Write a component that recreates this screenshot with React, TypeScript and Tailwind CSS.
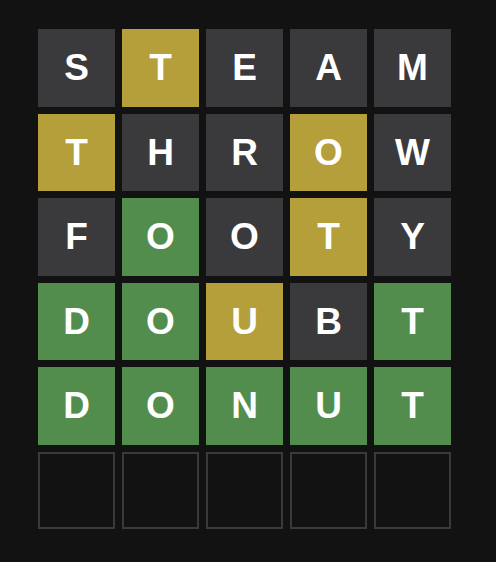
import React from "react";

type S = "a" | "p" | "c" | "e";
const rows: [string, string][] = [
  ["STEAM", "apaaa"],
  ["THROW", "paapa"],
  ["FOOTY", "acapa"],
  ["DOUBT", "ccpac"],
  ["DONUT", "ccccc"],
  ["     ", "eeeee"],
];

const cls: Record<S, string> = {
  a: "bg-[#3a3a3c]",
  p: "bg-[#b59f3b]",
  c: "bg-[#538d4e]",
  e: "border-2 border-[#3a3a3c]",
};

export default function App() {
  return (
    <div className="w-[496px] h-[562px] bg-[#121212] pt-[29px] pl-[38px]">
      <div className="grid grid-cols-5 grid-rows-6 w-[413px] h-[500px] gap-x-[7px] gap-y-[7px]">
        {rows.flatMap(([w, s], r) =>
          w.split("").map((ch, i) => (
            <div
              key={`${r}-${i}`}
              className={`${cls[s[i] as S]} flex items-center justify-center text-white font-bold text-[37px] leading-none`}
              style={{ fontFamily: '"Liberation Sans", Arial, sans-serif' }}
            >
              {ch.trim()}
            </div>
          ))
        )}
      </div>
    </div>
  );
}
